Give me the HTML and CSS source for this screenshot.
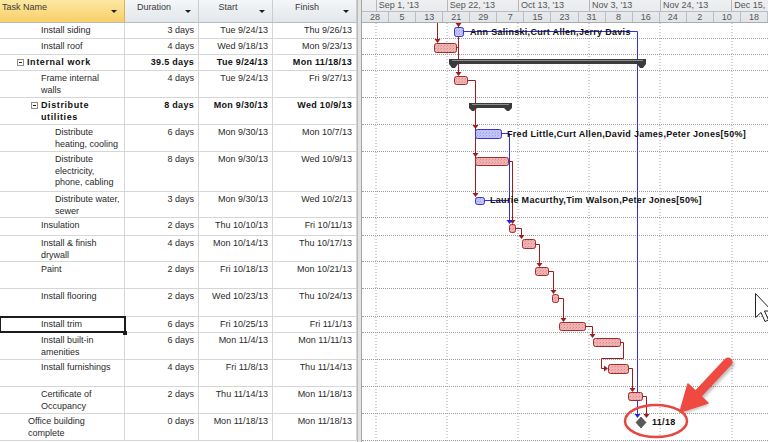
FILE: index.html
```html
<!DOCTYPE html>
<html>
<head>
<meta charset="utf-8">
<link rel="stylesheet" href="styles.css">
</head>
<body>
<div class="app">
  <div class="grid">
    <div class="thead">
      <div class="hcell c1 active"><span class="htext left">Task Name</span><span class="dd"></span></div>
      <div class="hcell c2"><span class="htext">Duration</span><span class="dd"></span></div>
      <div class="hcell c3"><span class="htext">Start</span><span class="dd"></span></div>
      <div class="hcell c4"><span class="htext">Finish</span><span class="dd"></span></div>
    </div>
    <div class="tbody">
      <div class="row h16"><div class="cell c1 l3">Install siding</div><div class="cell c2 num">3 days</div><div class="cell c3 num">Tue 9/24/13</div><div class="cell c4 num">Thu 9/26/13</div></div>
      <div class="row h16"><div class="cell c1 l3">Install roof</div><div class="cell c2 num">4 days</div><div class="cell c3 num">Wed 9/18/13</div><div class="cell c4 num">Mon 9/23/13</div></div>
      <div class="row h16 b"><div class="cell c1 l2s"><span class="tog"></span><span>Internal work</span></div><div class="cell c2 num">39.5 days</div><div class="cell c3 num">Tue 9/24/13</div><div class="cell c4 num">Mon 11/18/13</div></div>
      <div class="row h27"><div class="cell c1 l3">Frame internal<br>walls</div><div class="cell c2 num">4 days</div><div class="cell c3 num">Tue 9/24/13</div><div class="cell c4 num">Fri 9/27/13</div></div>
      <div class="row h27 b"><div class="cell c1 l3s"><span class="tog"></span><span>Distribute<br>utilities</span></div><div class="cell c2 num">8 days</div><div class="cell c3 num">Mon 9/30/13</div><div class="cell c4 num">Wed 10/9/13</div></div>
      <div class="row h27"><div class="cell c1 l4">Distribute<br>heating, cooling</div><div class="cell c2 num">6 days</div><div class="cell c3 num">Mon 9/30/13</div><div class="cell c4 num">Mon 10/7/13</div></div>
      <div class="row h40"><div class="cell c1 l4">Distribute<br>electricity,<br>phone, cabling</div><div class="cell c2 num">8 days</div><div class="cell c3 num">Mon 9/30/13</div><div class="cell c4 num">Wed 10/9/13</div></div>
      <div class="row h26"><div class="cell c1 l4">Distribute water,<br>sewer</div><div class="cell c2 num">3 days</div><div class="cell c3 num">Mon 9/30/13</div><div class="cell c4 num">Wed 10/2/13</div></div>
      <div class="row h18"><div class="cell c1 l3">Insulation</div><div class="cell c2 num">2 days</div><div class="cell c3 num">Thu 10/10/13</div><div class="cell c4 num">Fri 10/11/13</div></div>
      <div class="row h26"><div class="cell c1 l3">Install &amp; finish<br>drywall</div><div class="cell c2 num">4 days</div><div class="cell c3 num">Mon 10/14/13</div><div class="cell c4 num">Thu 10/17/13</div></div>
      <div class="row h27"><div class="cell c1 l3">Paint</div><div class="cell c2 num">2 days</div><div class="cell c3 num">Fri 10/18/13</div><div class="cell c4 num">Mon 10/21/13</div></div>
      <div class="row h28"><div class="cell c1 l3">Install flooring</div><div class="cell c2 num">2 days</div><div class="cell c3 num">Wed 10/23/13</div><div class="cell c4 num">Thu 10/24/13</div></div>
      <div class="row h16"><div class="cell c1 l3 sel">Install trim</div><div class="cell c2 num">6 days</div><div class="cell c3 num">Fri 10/25/13</div><div class="cell c4 num">Fri 11/1/13</div></div>
      <div class="row h27"><div class="cell c1 l3">Install built-in<br>amenities</div><div class="cell c2 num">6 days</div><div class="cell c3 num">Mon 11/4/13</div><div class="cell c4 num">Mon 11/11/13</div></div>
      <div class="row h27"><div class="cell c1 l3">Install furnishings</div><div class="cell c2 num">4 days</div><div class="cell c3 num">Fri 11/8/13</div><div class="cell c4 num">Thu 11/14/13</div></div>
      <div class="row h27"><div class="cell c1 l3">Certificate of<br>Occupancy</div><div class="cell c2 num">2 days</div><div class="cell c3 num">Thu 11/14/13</div><div class="cell c4 num">Mon 11/18/13</div></div>
      <div class="row h27"><div class="cell c1 l2">Office building<br>complete</div><div class="cell c2 num">0 days</div><div class="cell c3 num">Mon 11/18/13</div><div class="cell c4 num">Mon 11/18/13</div></div>
    </div>
  </div>
  <div class="splitter"></div>
  <div class="gantt">
    <div class="timescale">
      <div class="tier major">
        <div class="mj first"></div>
        <div class="mj">Sep 1, '13</div>
        <div class="mj">Sep 22, '13</div>
        <div class="mj">Oct 13, '13</div>
        <div class="mj">Nov 3, '13</div>
        <div class="mj">Nov 24, '13</div>
        <div class="mj">Dec 15, '13</div>
      </div>
      <div class="tier minor">
        <div class="mn">28</div><div class="mn">5</div><div class="mn">13</div><div class="mn">21</div><div class="mn">29</div>
        <div class="mn">7</div><div class="mn">15</div><div class="mn">23</div><div class="mn">31</div><div class="mn">8</div>
        <div class="mn">16</div><div class="mn">24</div><div class="mn">2</div><div class="mn">10</div><div class="mn">18</div>
      </div>
    </div>
    <div class="chart">
      <div class="grow h16"></div><div class="grow h16"></div><div class="grow h16"></div><div class="grow h27"></div>
      <div class="grow h27"></div><div class="grow h27"></div><div class="grow h40"></div><div class="grow h26"></div>
      <div class="grow h18"></div><div class="grow h26"></div><div class="grow h27"></div><div class="grow h28"></div>
      <div class="grow h16"></div><div class="grow h27"></div><div class="grow h27"></div><div class="grow h27"></div>
      <div class="grow h27"></div>
      <svg class="overlay" width="406" height="419" viewBox="0 0 406 419">
        <defs>
          <pattern id="ph" width="3" height="3" patternUnits="userSpaceOnUse">
            <rect width="3" height="3" fill="#efb3b3"/><rect width="1" height="1" fill="#d98b8b"/><rect x="2" y="1" width="1" height="1" fill="#e29d9d"/>
          </pattern>
          <pattern id="pb" width="3" height="3" patternUnits="userSpaceOnUse">
            <rect width="3" height="3" fill="#c4c4f4"/><rect width="1" height="1" fill="#9e9ee8"/><rect x="2" y="1" width="1" height="1" fill="#b0b0ee"/>
          </pattern>
          <filter id="sh" x="-20%" y="-20%" width="140%" height="140%">
            <feGaussianBlur stdDeviation="1.5"/>
          </filter>
        </defs>
        <g transform="translate(-362 -23)">
          <g class="vgrid">
            <line x1="376" y1="23" x2="376" y2="442"/>
            <line x1="447" y1="23" x2="447" y2="442"/>
            <line x1="518" y1="23" x2="518" y2="442"/>
            <line x1="589" y1="23" x2="589" y2="442"/>
            <line x1="660" y1="23" x2="660" y2="442"/>
            <line x1="732" y1="23" x2="732" y2="442"/>
          </g>

          <path class="blink" d="M463.5,31.5H637.5V416 M501,133.5H509.5V222 M484,200.5H509.5"/>
          <path class="rlink" d="M437.5,23V40 M458.5,23V74 M456,47.5H458.5 M467,80.5H475.5V195 M508,161.5H512.5V222 M515,228.5H521.5V237 M535,244.5H539.5V265 M548,271.5H553.5V292 M558,298.5H563.5V320 M585,326.5H592.5V336 M620,342.5H623.5V358.5H601.5V368.5H605 M628,368.5H632.5V390 M642,396.5H646.5V416"/>

          <g class="rhead">
            <polygon points="434.5,39 440.5,39 437.5,43"/>
            <polygon points="455.5,23 461.5,23 458.5,27"/>
            <polygon points="455.5,72 461.5,72 458.5,76"/>
            <polygon points="472.5,125 478.5,125 475.5,129"/>
            <polygon points="472.5,153 478.5,153 475.5,157"/>
            <polygon points="472.5,193 478.5,193 475.5,197"/>
            <polygon points="509.5,220 515.5,220 512.5,224"/>
            <polygon points="518.5,235 524.5,235 521.5,239"/>
            <polygon points="536.5,263 542.5,263 539.5,267"/>
            <polygon points="550.5,290 556.5,290 553.5,294"/>
            <polygon points="560.5,318 566.5,318 563.5,322"/>
            <polygon points="589.5,334 595.5,334 592.5,338"/>
            <polygon points="604,365.5 604,371.5 608,368.5"/>
            <polygon points="629.5,388 635.5,388 632.5,392"/>
            <polygon points="643.5,414 649.5,414 646.5,418"/>
          </g>
          <g class="bhead">
            <polygon points="634.5,414 640.5,414 637.5,418"/>
            <polygon points="506.5,220 512.5,220 509.5,224"/>
          </g>

          <g class="sum">
            <rect x="449" y="59" width="197" height="5"/>
            <polygon points="449,59 458,59 458,64 455,68 452,68 449,64"/>
            <polygon points="637,59 646,59 646,64 643,68 640,68 637,64"/>
            <rect x="469" y="103" width="43" height="5"/>
            <polygon points="469,103 477,103 477,108 474,111 472,111 469,108"/>
            <polygon points="504,103 512,103 512,108 509,111 507,111 504,108"/>
          </g>
          <g class="sumhi">
            <rect x="452" y="60" width="191" height="1"/>
            <rect x="472" y="104" width="37" height="1"/>
          </g>

          <g class="rbar">
            <rect x="434.5" y="43.5" width="22" height="9" rx="2"/>
            <rect x="454.5" y="76.5" width="13" height="8" rx="2"/>
            <rect x="475.5" y="157.5" width="33" height="8" rx="2"/>
            <rect x="509.5" y="224.5" width="6" height="8" rx="2"/>
            <rect x="522.5" y="239.5" width="13" height="9" rx="2"/>
            <rect x="535.5" y="267.5" width="13" height="8" rx="2"/>
            <rect x="552.5" y="294.5" width="6" height="8" rx="2"/>
            <rect x="559.5" y="322.5" width="26" height="8" rx="2"/>
            <rect x="593.5" y="338.5" width="27" height="8" rx="2"/>
            <rect x="608.5" y="364.5" width="20" height="9" rx="2"/>
            <rect x="628.5" y="392.5" width="14" height="8" rx="2"/>
          </g>
          <g class="bbar">
            <rect x="454.5" y="27.5" width="9" height="9" rx="2"/>
            <rect x="475.5" y="129.5" width="26" height="9" rx="2"/>
            <rect x="475.5" y="197.5" width="9" height="7" rx="2"/>
          </g>

          <polygon class="ms" points="641,417 646,422.5 641,428 636,422.5"/>

          <text class="lbl" x="470" y="34.5">Ann Salinski,Curt Allen,Jerry Davis</text>
          <text class="lbl" x="507" y="136.5">Fred Little,Curt Allen,David James,Peter Jones[50%]</text>
          <text class="lbl" x="490" y="203">Laurie Macurthy,Tim Walson,Peter Jones[50%]</text>
          <text class="lbl" x="652" y="424.5">11/18</text>

          <g class="callout-shadow" filter="url(#sh)">
            <line x1="699" y1="397" x2="730" y2="364"/>
            <polygon points="683,414 690,387 709,405"/>
          </g>
          <ellipse class="ring" cx="656" cy="421" rx="31" ry="16"/>
          <g class="callout">
            <line x1="697" y1="395" x2="728" y2="362"/>
            <polygon points="680,412 688,384 708,403"/>
          </g>

          <path class="cursor" d="M755.5,293.5 v24 l5.5,-5 l4,9 l3.5,-1.5 l-4,-9 h7.5 z"/>
        </g>
      </svg>
    </div>
  </div>
</div>
</body>
</html>
```

FILE: styles.css
```css
html, body {
  margin: 0;
  padding: 0;
}
body {
  width: 768px;
  height: 442px;
  overflow: hidden;
  background: #fff;
  font-family: "Liberation Sans", Arial, sans-serif;
  font-size: 9px;
  color: #2a2a2a;
}
.app {
  display: flex;
  height: 442px;
}

/* ---------- task grid ---------- */
.grid {
  width: 357px;
  flex: none;
  display: flex;
  flex-direction: column;
}
.c1 { width: 125px; }
.c2 { width: 74px; }
.c3 { width: 74px; }
.c4 { width: 84px; }

.thead {
  display: flex;
  height: 23px;
  box-sizing: border-box;
  border-bottom: 1px solid #b7bcc2;
}
.hcell {
  display: flex;
  align-items: flex-start;
  box-sizing: border-box;
  border-right: 1px solid #c9cdd2;
  padding: 2px 7px 0 2px;
  background: linear-gradient(#f4f6f8, #e3e7eb);
  color: #3a3a3a;
  line-height: 10px;
}
.hcell.active {
  background: linear-gradient(#fde8a2, #f8cf68);
  border-right-color: #d9b25a;
}
.htext {
  flex: 1;
  text-align: center;
  padding-right: 4px;
}
.htext.left {
  text-align: left;
}
.dd {
  width: 0;
  height: 0;
  margin-top: 8px;
  border-left: 3px solid transparent;
  border-right: 3px solid transparent;
  border-top: 3px solid #1e1e1e;
}

.tbody {
  display: flex;
  flex-direction: column;
}
.row {
  display: flex;
  box-sizing: border-box;
  border-bottom: 1px solid #d6d6d6;
}
.cell {
  box-sizing: border-box;
  border-right: 1px solid #d6d6d6;
  padding: 2px 4px 0 4px;
  line-height: 11.5px;
  white-space: nowrap;
}
.cell.num {
  text-align: right;
}
.b .cell {
  font-weight: bold;
  color: #111;
  letter-spacing: 0.3px;
}
.b .cell.c1 {
  letter-spacing: 0.6px;
}
.l2 { padding-left: 28px; }
.l3 { padding-left: 41px; }
.l4 { padding-left: 55px; }
.l2s, .l3s {
  display: flex;
  align-items: flex-start;
}
.l2s { padding-left: 17px; }
.l3s { padding-left: 31px; }
.tog {
  flex: none;
  width: 7px;
  height: 7px;
  margin: 2px 3px 0 0;
  box-sizing: border-box;
  border: 1px solid #8e8e8e;
  background: #fafafa;
  display: flex;
  align-items: center;
  justify-content: center;
}
.tog::after {
  content: "";
  display: block;
  width: 3px;
  height: 1px;
  background: #222;
}
.sel {
  position: relative;
  outline: 2px solid #1c1c1c;
  outline-offset: -1px;
}
.sel::after {
  content: "";
  position: absolute;
  right: -3px;
  bottom: -3px;
  width: 4px;
  height: 4px;
  background: #1c1c1c;
}

.h16 { height: 16px; }
.h18 { height: 18px; }
.h26 { height: 26px; }
.h27 { height: 27px; }
.h28 { height: 28px; }
.h40 { height: 40px; }

/* ---------- splitter ---------- */
.splitter {
  width: 5px;
  flex: none;
  box-sizing: border-box;
  background: #e3e3e3;
  border-left: 1px solid #b9b9b9;
  border-right: 1px solid #a4a4a4;
}

/* ---------- gantt ---------- */
.gantt {
  flex: 1;
  display: flex;
  flex-direction: column;
  min-width: 0;
}
.timescale {
  height: 23px;
  box-sizing: border-box;
  border-bottom: 1px solid #a9adb2;
  background: linear-gradient(#eef0f2, #e2e5e8);
  color: #555;
  overflow: hidden;
}
.tier {
  display: flex;
  white-space: nowrap;
}
.major {
  height: 12px;
  box-sizing: border-box;
  border-bottom: 1px solid #b9bdc2;
}
.mj {
  flex: none;
  width: 71.1px;
  box-sizing: border-box;
  border-left: 1px solid #b4b8bd;
  padding-left: 2px;
  line-height: 11px;
  overflow: hidden;
}
.mj.first {
  width: 13.7px;
  border-left: none;
}
.minor {
  height: 10px;
}
.mn {
  flex: none;
  width: 27.07px;
  box-sizing: border-box;
  border-right: 1px solid #b9bdc2;
  text-align: center;
  line-height: 10px;
}

.chart {
  position: relative;
  flex: 1;
  display: flex;
  flex-direction: column;
}
.grow {
  flex: none;
  box-sizing: border-box;
  border-bottom: 1px dotted #9c9c9c;
}
.overlay {
  position: absolute;
  left: 0;
  top: 0;
  overflow: visible;
}
.vgrid line {
  stroke: #a8a8a8;
  stroke-width: 1;
  stroke-dasharray: 1 2;
}
.rlink {
  fill: none;
  stroke: #a31a1a;
  stroke-width: 1;
}
.blink {
  fill: none;
  stroke: #2f2fe0;
  stroke-width: 1;
}
.rhead polygon { fill: #a31a1a; }
.bhead polygon { fill: #2424e0; }
.sum rect, .sum polygon { fill: #3b3b3b; }
.sumhi rect { fill: #8d8d8d; }
.rbar rect {
  fill: url(#ph);
  stroke: #a42a2a;
  stroke-width: 1;
}
.bbar rect {
  fill: url(#pb);
  stroke: #3434d2;
  stroke-width: 1;
}
.ms {
  fill: #5a5a5a;
  stroke: #3a3a3a;
  stroke-width: 0.6;
}
.lbl {
  font-family: "Liberation Sans", Arial, sans-serif;
  font-size: 9px;
  font-weight: bold;
  letter-spacing: 0.3px;
  fill: #111;
}
.callout-shadow line {
  stroke: rgba(0, 0, 0, 0.25);
  stroke-width: 9;
  stroke-linecap: round;
}
.callout-shadow polygon {
  fill: rgba(0, 0, 0, 0.25);
}
.ring {
  fill: none;
  stroke: #e8463f;
  stroke-width: 2.5;
}
.callout line {
  stroke: #ef4a42;
  stroke-width: 9;
  stroke-linecap: round;
}
.callout polygon {
  fill: #ef4a42;
  stroke: #ef4a42;
  stroke-width: 1.5;
  stroke-linejoin: round;
}
.cursor {
  fill: #fff;
  stroke: #222;
  stroke-width: 1;
}
```
